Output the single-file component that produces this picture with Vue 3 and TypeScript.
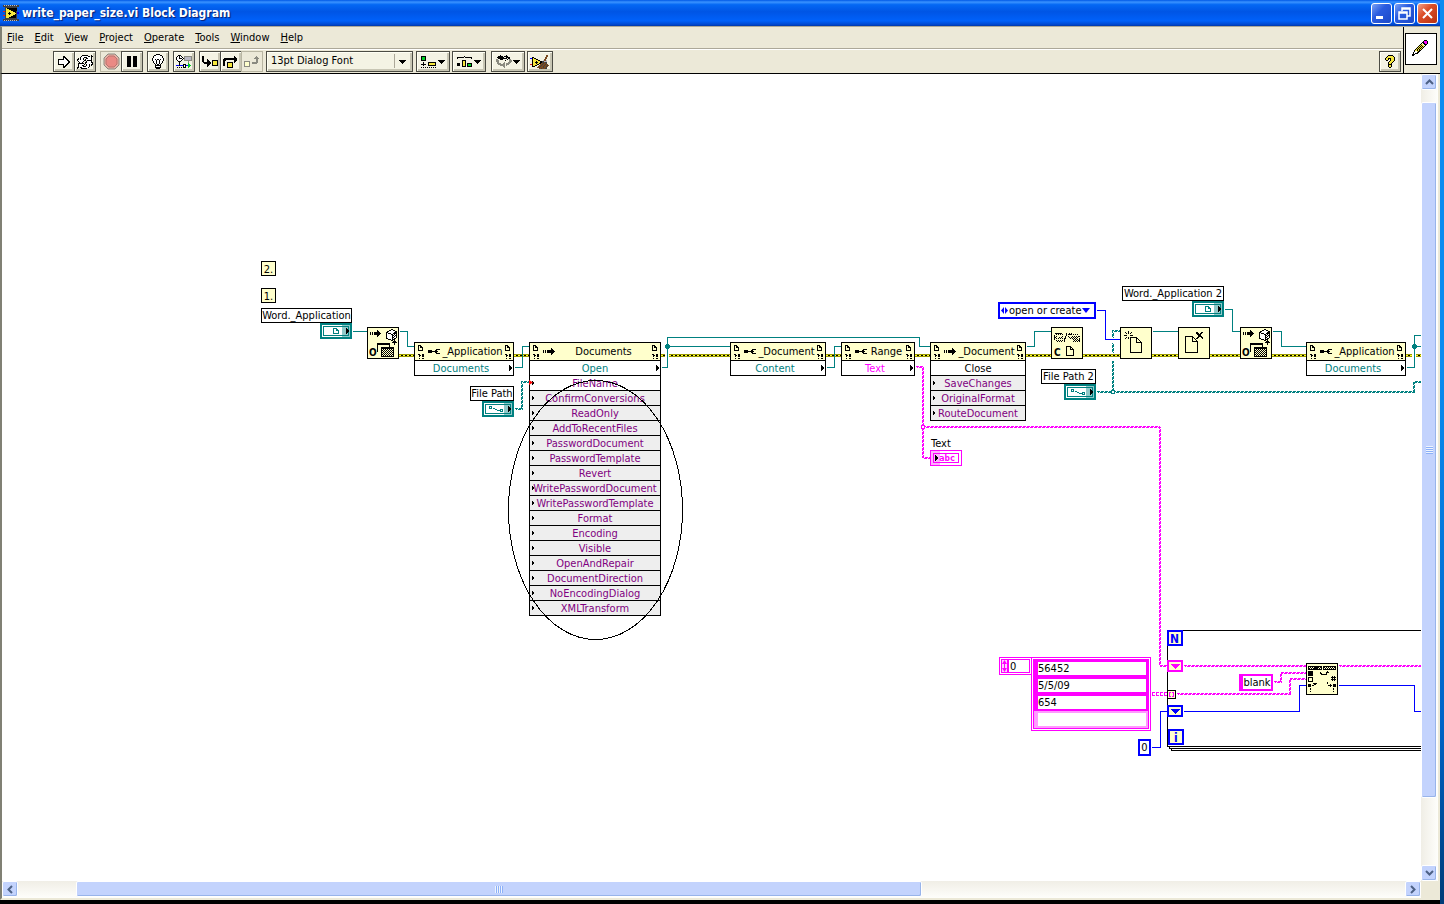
<script setup lang="ts">
import { h, ref, type FunctionalComponent } from 'vue'

type Part = [d: string, fill?: string, stroke?: string, width?: number]

const palette: Record<string, string> = {
  '#': '#000', w: '#fff', y: '#ffffcc', Y: '#f5e63c', g: '#00cc22', t: '#008080', m: '#ff00ff', b: '#0000ff',
  o: '#8a8a80', r: '#d22', n: '#7a4a20', k: '#404040', s: '#b8b8c4',
}

const Bits: FunctionalComponent<{ art: string[] }> = ({ art }) => {
  const paths: Record<string, string> = {}
  art.forEach((row, y) => [...row].forEach((c, x) => {
    if (palette[c]) paths[c] = (paths[c] ?? '') + `M${x} ${y}h1v1h-1z`
  }))
  const width = Math.max(...art.map((r) => r.length))
  return h('svg', { width, height: art.length, 'shape-rendering': 'crispEdges', 'aria-hidden': 'true' },
    Object.entries(paths).map(([c, d]) => h('path', { d, fill: palette[c] })))
}
Bits.props = ['art']

const Shape: FunctionalComponent<{ parts: Part[]; width: number; height: number }> = (p) =>
  h('svg', { width: p.width, height: p.height, 'aria-hidden': 'true' },
    p.parts.map(([d, fill, stroke, w]) => h('path', { d, fill: fill ?? 'none', stroke: stroke ?? 'none', 'stroke-width': w ?? 1 })))
Shape.props = ['parts', 'width', 'height']

const art = {
  run: ['.....##.....', '.....###....', '.....#w##...', '######ww##..', '#wwwwwwww##.', '#wwwwwwwww##', '#wwwwwwwww##', '#wwwwwwww##.', '######ww##..', '.....#w##...', '.....###....', '.....##.....'],
  cycle: [
    '.....######...#.', '....#wwwwww##.##', '...#www###wwww#.', '.#.#ww#..##www#.', '##w#ww#.#wwwww#.', '#wwwwww##.#####.',
    '.#wwww#..#wwww#.', '..#ww#..##wwww##', '.######.#wwwwww#', '.#wwwww#.#ww#w##', '.#www##..#ww#.#.', '.#wwww###www#...', '##.##wwwwww#....', '#...######......'],
  pause: Array.from({ length: 11 }, () => '####..####'),
  bulb: [
    '....####....', '..##wwww##..', '.#wwwwwwww#.', '.#wwwwwwww#.', '#wwwwwwwwww#', '#ww#w##w#ww#', '#www#ww#www#', '.#ww#ww#ww#.',
    '.#ww#ww#ww#.', '..#w#ww#w#..', '...#w##w#...', '...######...', '...#wwww#...', '...######...', '....####....'],
  retain: [
    '..###...........', '.#w#w#..oooooooo', '#ww#ww#.osssssso', '#ww###w#osssssso', '#wwwww#.osssssso', '.#www#..oooooooo',
    '..###.......o...', '...#........o...', '...#........g...', '...#...###..gg..', 'bbb#bbb#w#bbggg.', '.......#w#..gg..', '.#.#.#.###..g...'],
  into: [
    '##..............', '##..............', '##..............', '##...#..........', '##...##...######', '##...###..#YYYY#',
    '.########.#YYYY#', '..#######.#YYYY#', '.....###..#YYYY#', '.....##...######', '.....#..........'],
  over: [
    '...........#....', '...........##...', '.#############..', '##############..', '###........###..', '##.........##...',
    '##..######.#....', '##..#YYYY#......', '##..#YYYY#......', '##..#YYYY#......', '....#YYYY#......', '....######......'],
  out: [
    '............o...', '...........ooo..', '..........ooooo.', '............oo..', '............oo..', 'oooooo......oo..',
    'oyyyyo..oooooo..', 'oyyyyo..ooooo...', 'oyyyyo..........', 'oyyyyo..........', 'oooooo..........'],
  align: [
    '#####...........', '#ggg#...........', '#ggg#...........', '#ggg#...........', '#####...........', '................',
    '..#....########.', '..#....#YYYYYY#.', '#####..#YYYYYY#.', '..#....########.', '................', '#.#.#.#.#.#.#.#.'],
  distribute: [
    '.......#........', '#######.#######.', '#.............#.', '................', '.....####.......', '.....#YY#.......',
    '.....#YY#.......', '###..#YY#.#####.', '###..#YY#.#ggg#.', '###..#YY#.#ggg#.', '.....####.#####.'],
  reorder: [
    '....#.....#.....', '..#####.####....', '.#######..####..', '..#########.##..', 'oo..###....#.oo.', 'ooo......#...ooo',
    'ooo..........ooo', '.oo.....o...ooo.', '.oooo..oo.oooo..', '..ooooooo.ooo...', '....ooooo.o.....', '.......oo.......', '........o.......'],
  clean: [
    '................nn..', '................nn..', '..##...........nn...', 'bb#Y##.........nn...', '..#YYY##......nn....', '..#YYYYY##...snns...',
    '..#YYY#YYY##kksss...', '..#YY###YY##kknkk...', '..#YYY#YY##nnknnk...', 'rr#YYYY##.nnknnknn..', '..#YY##..nnknnknnkn.', '..###...nnknnknnkn..', '.......nnknnnknnk...',
    '.........nnknnnkk...'],
  down: ['#######', '.#####.', '..###..', '...#...'],
  doc: ['###..', '#.##.', '#.###', '#...#', '#...#', '#####'],
  fault: ['##..##', '.##.##', '.#..##', '......', '.#..##'],
  wrench: ['........####', '####...##...', '##########..', '####...##...', '........####'],
  invoke: ['........#...', '........##..', '#.#.#######.', '#.#.########', '#.#.#######.', '........##..', '........#...'],
  nib: ['#..', '##.', '###', '###', '##.', '#..'],
  tinyNib: ['#.', '##', '##', '#.'],
  logo: [
    'kskskskskskskskk', 'kkkkkkkkkkkkkkkk', '..kkkkkkkkkkkk..', '..kY##########..', '..kYYY########..', '..kYYYYY######..',
    'rrkYYYYYYY###k..', '..kYYY#YYYYY#kbb', '..kYY###YYYYYkbb', '..kYYY#YYYYY#k..', 'rrkYYYYYYY###k..', '..kYYYYY#####k..',
    '..kYYY#######k..', '..kkkkkkkkkkkk..', 'kkkkkkkkkkkkkkkk', 'kskskskskskskskk'],
  pencil: [
    '............###.', '...........#mmm#', '..........##mmm#', '.........#w##mm#', '........#YYw###.', '.......#Y#YYw#..', '......#Y#Y#Y#...',
    '.....#Y#Y#Y#....', '....#Y#Y#Y#.....', '...#Y#Y#Y#......', '..#YY#Y##.......', '..#wwY##........', '.#www##.........', '.#w###..........', '###.............', '##..............'],
  question: [
    '...#####...', '..#YYYYY#..', '.#YYYYYYY#.', '#YY###YYY#.', '#YY#.#YYY#.', '.##..#YYY#.', '....#YYY#..', '...#YYY#...',
    '...#YY#....', '...####....', '...#YY#....', '...#YY#....', '....##.....'],
}

const stopSign: Part[] = [['M5 1h7l4 4v7l-4 4h-7l-4-4v-7z', '#e8b0a4', '#8a8a80', 1], ['M6 3h5l3 3v5l-3 3h-5l-3-3v-5z', '#ea8a84', '#b8746e', 1]]

const menus = ['File', 'Edit', 'View', 'Project', 'Operate', 'Tools', 'Window', 'Help']
const toolGroups: { label: string; art?: string[]; off?: boolean }[][] = [
  [{ label: 'Run', art: art.run }, { label: 'Run Continuously', art: art.cycle }],
  [{ label: 'Abort Execution', off: true }, { label: 'Pause', art: art.pause }],
  [{ label: 'Highlight Execution', art: art.bulb }],
  [{ label: 'Retain Wire Values', art: art.retain }],
  [{ label: 'Step Into', art: art.into }, { label: 'Step Over', art: art.over }, { label: 'Step Out', art: art.out, off: true }],
]
const layoutTools = [
  { label: 'Align Objects', art: art.align }, { label: 'Distribute Objects', art: art.distribute }, { label: 'Reorder', art: art.reorder },
]

// Diagram coordinates are window coordinates; the canvas begins at this point.
const origin = { x: 2, y: 74 }
const at = (x: number, y: number, w?: number) => ({
  left: `${x - origin.x}px`, top: `${y - origin.y}px`, ...(w ? { width: `${w}px` } : {}),
})

interface Row { text: string; tone?: string; input?: boolean; output?: boolean; grey?: boolean }
const arg = (text: string, grey = true): Row => ({ text, tone: 'purple', input: true, grey })
const nodes: { x: number; w: number; kind: 'wrench' | 'invoke'; title: string; rows: Row[] }[] = [
  { x: 414, w: 100, kind: 'wrench', title: '_Application', rows: [{ text: 'Documents', tone: 'teal', output: true }] },
  {
    x: 529, w: 132, kind: 'invoke', title: 'Documents', rows: [
      { text: 'Open', tone: 'teal', output: true }, arg('FileName', false),
      ...['ConfirmConversions', 'ReadOnly', 'AddToRecentFiles', 'PasswordDocument', 'PasswordTemplate', 'Revert', 'WritePasswordDocument',
        'WritePasswordTemplate', 'Format', 'Encoding', 'Visible', 'OpenAndRepair', 'DocumentDirection', 'NoEncodingDialog', 'XMLTransform'].map((t) => arg(t)),
    ],
  },
  { x: 730, w: 96, kind: 'wrench', title: '_Document', rows: [{ text: 'Content', tone: 'teal', output: true }] },
  { x: 841, w: 74, kind: 'wrench', title: 'Range', rows: [{ text: 'Text', tone: 'pink', output: true }] },
  { x: 930, w: 96, kind: 'invoke', title: '_Document', rows: [{ text: 'Close' }, arg('SaveChanges'), arg('OriginalFormat'), arg('RouteDocument')] },
  { x: 1306, w: 100, kind: 'wrench', title: '_Application', rows: [{ text: 'Documents', tone: 'teal', output: true }] },
]

const labels = [
  { x: 261, y: 261, w: 15, text: '2.', note: true }, { x: 261, y: 288, w: 15, text: '1.', note: true },
  { x: 261, y: 308, w: 91, text: 'Word._Application' }, { x: 470, y: 386, w: 44, text: 'File Path' },
  { x: 1122, y: 286, w: 102, text: 'Word._Application 2' }, { x: 1041, y: 369, w: 55, text: 'File Path 2' },
]
const terminals = [
  { x: 320, y: 323, path: false }, { x: 482, y: 401, path: true }, { x: 1192, y: 301, path: false }, { x: 1064, y: 384, path: true },
]

const solidWires = [
  { c: '#008080', p: '352,331 367,331' }, { c: '#008080', p: '399,331 407,331 407,346 414,346' },
  { c: '#008080', p: '514,367 522,367 522,346 529,346' }, { c: '#008080', p: '661,367 667,367 667,337 919,337 919,346 930,346' },
  { c: '#008080', p: '667,346 730,346' }, { c: '#008080', p: '826,367 834,367 834,346 841,346' },
  { c: '#008080', p: '1026,346 1034,346 1034,331 1051,331' }, { c: '#008080', p: '1152,331 1178,331' },
  { c: '#008080', p: '1224,309 1232,309 1232,331 1240,331' }, { c: '#008080', p: '1272,331 1281,331 1281,346 1306,346' },
  { c: '#008080', p: '1406,367 1414,367 1414,335 1440,335' }, { c: '#008080', p: '1414,346 1440,346' },
  { c: '#0000ff', p: '1096,310 1105,310 1105,339 1120,339' }, { c: '#0000ff', p: '1151,747 1160,747 1160,711 1167,711' },
  { c: '#0000ff', p: '1183,711 1299,711 1299,685 1306,685' }, { c: '#0000ff', p: '1338,685 1414,685 1414,711 1440,711' },
]
const wavyWires = [
  { c: '#008080', p: '514,408 521,408 521,381 529,381' }, { c: '#008080', p: '1096,391 1413,391 1413,381 1440,381' },
  { c: '#008080', p: '1112,391 1112,359' }, { c: '#008080', p: '1112,351 1112,342' }, { c: '#008080', p: '1112,336 1112,330 1120,330' },
  { c: '#ff00ff', p: '915,366 922,366 922,457 930,457' }, { c: '#ff00ff', p: '922,426 1159,426 1159,665 1167,665' },
  { c: '#ff00ff', p: '1183,665 1306,665' }, { c: '#ff00ff', p: '1338,665 1440,665' },
  { c: '#ff00ff', p: '1273,681 1280,681 1280,672 1306,672' }, { c: '#ff00ff', p: '1176,693 1289,693 1289,678 1306,678' },
]
const errorWires = [[399, 414], [514, 529], [661, 665], [669, 730], [826, 841], [915, 930], [1026, 1051], [1083, 1120], [1152, 1178], [1210, 1240], [1272, 1306], [1406, 1412], [1416, 1440]]

const fonts = ['13pt Dialog Font', '13pt Application Font', '13pt System Font']
const font = ref(fonts[0])
const operations = ['open or create', 'open', 'create']
const operation = ref(operations[0])
const cells = ref(['56452', '5/5/09', '654', ''])
const index = ref('0')
const start = ref('0')
const pattern = ref('blank')
const vertical = { before: 12, thumb: 696, after: 67 }
const horizontal = { before: 58, thumb: 845, after: 484 }
</script>

<template>
  <div class="desktop">
    <main class="window">
      <header class="title">
        <Bits :art="art.logo" />
        <h1>write_paper_size.vi Block Diagram</h1>
        <button class="cap" aria-label="Minimize"><svg width="19" height="19"><path d="M4 12h7v3h-7z" fill="#fff" /></svg></button>
        <button class="cap" aria-label="Restore"><svg width="19" height="19"><path d="M7 7V4h8v8h-3M7 5h8M4 8h8v7h-8zM4 9h8" fill="none" stroke="#fff" stroke-width="1.5" /></svg></button>
        <button class="cap close" aria-label="Close"><svg width="19" height="19"><path d="M5 5l9 9M14 5l-9 9" stroke="#fff" stroke-width="2" /></svg></button>
      </header>
      <div class="bars">
        <div class="bar-rows">
          <nav class="menu">
            <button v-for="m in menus" :key="m"><u>{{ m[0] }}</u>{{ m.slice(1) }}</button>
          </nav>
          <div class="tools" role="toolbar" aria-label="Diagram tools">
            <div v-for="(g, i) in toolGroups" :key="i" class="group">
              <button v-for="t in g" :key="t.label" class="tool" :class="{ off: t.off }" :aria-label="t.label" :disabled="t.off">
                <Bits v-if="t.art" :art="t.art" />
                <Shape v-else :parts="stopSign" :width="17" :height="17" />
              </button>
            </div>
            <div class="font">
              <select v-model="font" aria-label="Text settings"><option v-for="f in fonts" :key="f">{{ f }}</option></select>
              <Bits class="font-arrow" :art="art.down" />
            </div>
            <button v-for="t in layoutTools" :key="t.label" class="tool wide" :class="{ apart: t.label === 'Reorder' }" :aria-label="t.label">
              <Bits :art="t.art" /><Bits :art="art.down" />
            </button>
            <button class="tool broom" aria-label="Clean Up Diagram"><Bits :art="art.clean" /></button>
            <button class="tool help" aria-label="Context Help"><Bits :art="art.question" /></button>
          </div>
        </div>
        <div class="vi-icon"><div class="vi-face"><Bits :art="art.pencil" /></div></div>
      </div>

      <div class="work">
        <section class="canvas" aria-label="Block diagram">
          <svg class="layer" aria-hidden="true" shape-rendering="crispEdges">
            <defs>
              <pattern id="dither" width="2" height="2" patternUnits="userSpaceOnUse"><path d="M0 0h1v1h-1zM1 1h1v1h-1z" /></pattern>
            </defs>
            <g :transform="`translate(${-origin.x} ${-origin.y})`">
              <g v-for="([a, b], i) in errorWires" :key="'e' + i">
                <rect :x="a" y="354" :width="b - a" height="3" fill="#999900" />
                <path :d="`M${a} 355.5H${b}`" stroke="#000" />
                <path :d="`M${a} 355.5H${b}`" stroke="#ffff33" stroke-dasharray="2 2" />
              </g>
              <g transform="translate(.5 .5)" fill="none">
                <polyline v-for="w in solidWires" :key="w.p" :points="w.p" :stroke="w.c" />
                <g v-for="w in wavyWires" :key="w.p">
                  <polyline :points="w.p" :stroke="w.c" stroke-dasharray="3 1" />
                  <polyline :points="w.p" :stroke="w.c" stroke-dasharray="3 1" stroke-dashoffset="2" transform="translate(1 1)" />
                </g>
                <path d="M1151 692h16M1151 695h16" stroke="#f0f" stroke-dasharray="3 1" />
                <path d="M1151 693.5h16" stroke="#f0f" stroke-width="2" stroke-dasharray="1 3" />
              </g>
              <circle cx="667.5" cy="346.5" r="2.5" fill="#008080" /><circle cx="1414.5" cy="346.5" r="2.5" fill="#008080" />
              <circle cx="1113" cy="392" r="2" fill="#fff" stroke="#008080" /><circle cx="923" cy="427" r="2" fill="#fff" stroke="#f0f" />

              <path d="M1440 630.5H1167.5V746.5H1440M1169.5 747v1.5H1440M1171.5 749v1.5H1440" fill="none" stroke="#000" />

              <g v-for="x in [367, 1240]" :key="x" :transform="`translate(${x} 327)`">
                <rect x=".5" y=".5" width="31" height="31" fill="#ffc" stroke="#000" />
                <path d="M3 5h1v3h-1zM5 5h1v3h-1zM7 5h3v-2h1v1h1v1h1v1h1v1h-1v1h-1v1h-1v1h-1v-2h-3z" />
                <path d="M19.5 5.5l5-3 5 2v6l-4 3-6-2zM19.5 5.5l6 2v6M25.5 7.5l4-3" fill="#fff" stroke="#000" />
                <path d="M26 7l3-2v5l-3 2z" fill="url(#dither)" />
                <path d="M10.5 25v-9h12v4M10 17.5h13" fill="none" stroke="#000" />
                <rect x="14.5" y="20.5" width="12" height="9" fill="url(#dither)" stroke="#000" /><path d="M14 21.5h13M27.5 13v5M25 15.5h5M26 14.5h3" stroke="#000" />
                <text x="2" y="29">O</text>
              </g>
              <g transform="translate(1051 327)">
                <rect x=".5" y=".5" width="31" height="31" fill="#ffc" stroke="#000" />
                <path d="M4 6h7v2h-7zM3 9h3v3h-3zM7 10h4v2h-4zM5 13h7v2h-7zM17 6h4v2h-4zM20 9h8v2h-8zM22 12h7v3h-7zM17 9h2v2h-2z" fill="url(#dither)" />
                <path d="M3.5 8v6M11.5 7v6M5 6.5h5M18 7.5h9M19 11.5h8M28.5 9v6" fill="none" stroke="#000" stroke-dasharray="1 1" />
                <path d="M15.5 6v2l-1 2-1 3v2M15.5 19.5h4l3 3v6h-7zM19.5 19v3h3" fill="none" stroke="#000" />
                <text x="3" y="29">C</text>
              </g>
              <g transform="translate(1120 327)">
                <rect x=".5" y=".5" width="31" height="31" fill="#ffc" stroke="#000" />
                <path d="M10.5 10.5h6l5 5v10h-11zM16.5 10v5h5M8.5 4v3M5 5l2 2M12 5l-2 2M4 8.5h3M10 8.5h3M5 12l2-2M8.5 10v2" fill="none" stroke="#000" />
              </g>
              <g transform="translate(1178 327)">
                <rect x=".5" y=".5" width="31" height="31" fill="#ffc" stroke="#000" />
                <path d="M7.5 9.5h7l5 5v11h-12zM14.5 9v5h5" fill="none" stroke="#000" />
                <path d="M18 5h2v1h1v1h1v-1h1v-1h2v1h-1v1h-1v2h1v1h1v2h-1v-1h-1v-1h-2v1h-1v1h-2v-1h1v-1h1v-2h-1v-1h-1z" />
              </g>
              <g transform="translate(1306 663)">
                <rect x=".5" y=".5" width="31" height="31" fill="#ffc" stroke="#000" />
                <path d="M2.5 3.5h13v3h-13zM17.5 3.5h12v3h-12z" fill="url(#dither)" stroke="#000" />
                <path d="M8 3h4v4h-4zM2 8h5v5h-5zM2 21h3v3h-3zM27 21h3v3h-3zM4 25h1v2h-1zM4 28h1v1h-1zM27 25h1v2h-1zM27 28h1v1h-1zM6 22h2v1h-2zM22 22h4v1h-4zM24 21h1v3h-1z" />
                <path d="M2.5 14.5h4v4h-4zM14 9.5l2 2h4l2-3M20 9.5h3M8 21.5h1v-2M7 20.5h4M25 14.5h5M25 16.5h5M26.5 13v5M28.5 13v5M21 19v2" fill="none" stroke="#000" />
              </g>

              <rect x="1168" y="631" width="14" height="14" fill="#ffc" stroke="#00f" stroke-width="2" /><text class="loop" x="1170" y="643">N</text>
              <rect x="1169" y="730" width="14" height="14" fill="#ffc" stroke="#00f" stroke-width="2" /><text class="loop" x="1174" y="742">i</text>
              <rect x="1168" y="661" width="14" height="10" fill="#ffc" stroke="#f0f" stroke-width="2" /><path d="M1170 664h10l-5 5z" fill="#f0f" />
              <rect x="1168" y="706" width="14" height="10" fill="#ffc" stroke="#00f" stroke-width="2" /><path d="M1170 709h10l-5 5z" fill="#00f" />
              <rect x="1167.5" y="690.5" width="8" height="8" fill="#ffc" stroke="#000" /><path d="M1171 692.5h-1.5v4h1.5M1172 692.5h1.5v4h-1.5" fill="none" stroke="#f0f" />
            </g>
          </svg>

          <article v-for="n in nodes" :key="n.x" class="node" :class="n.kind" :style="at(n.x, 342, n.w)">
            <div class="node-head">
              <span class="marks"><Bits :art="art.doc" /><Bits :art="art.fault" /></span>
              <Bits :art="art[n.kind]" />
              <b>{{ n.title }}</b>
              <span class="marks"><Bits :art="art.doc" /><Bits :art="art.fault" /></span>
            </div>
            <div v-for="r in n.rows" :key="r.text" class="row" :class="[r.tone, { grey: r.grey }]">
              <Bits v-if="r.input" class="in" :art="art.tinyNib" />
              {{ r.text }}
              <Bits v-if="r.output" class="out" :art="art.nib" />
            </div>
          </article>

          <div v-for="l in labels" :key="l.text" class="label" :class="{ note: l.note }" :style="at(l.x, l.y, l.w)">{{ l.text }}</div>
          <div v-for="t in terminals" :key="t.x" class="terminal" :style="at(t.x, t.y)">
            <div class="terminal-face">
              <svg v-if="t.path" width="18" height="8" shape-rendering="crispEdges"><path d="M3.5 1.5h2v2h-2zM14.5 4.5h2v2h-2zM7 3.5h2M9 4.5h2M11 5.5h3" fill="none" stroke="#008080" /></svg>
              <svg v-else width="16" height="8" shape-rendering="crispEdges"><path d="M9.5 1.5h3l2 2v3h-5zM12.5 1v2h2" fill="none" stroke="#008080" /></svg>
            </div>
            <Bits class="out" :art="art.nib" />
          </div>

          <div class="plain" :style="at(931, 436)">Text</div>
          <div class="string-out" :style="at(930, 450)"><span>abc</span><Bits class="in" :art="art.nib" /></div>

          <div class="enum" :style="at(998, 302, 98)">
            <svg width="7" height="7"><path d="M3 0v7l-3-3.5zM4 0v7l3-3.5z" fill="#00f" /></svg>
            <select v-model="operation" aria-label="File operation"><option v-for="o in operations" :key="o">{{ o }}</option></select>
            <svg width="8" height="5"><path d="M0 0h8l-4 5z" fill="#00f" /></svg>
          </div>

          <div class="index" :style="at(999, 657)">
            <div class="spin">
              <button aria-label="Increment"><svg width="5" height="6"><path d="M0 4h5l-2.5-4zM2 4h1v2h-1z" fill="#f0f" /></svg></button>
              <button aria-label="Decrement"><svg width="5" height="6"><path d="M0 2h5l-2.5 4zM2 0h1v2h-1z" fill="#f0f" /></svg></button>
            </div>
            <input v-model="index" aria-label="Array index">
          </div>
          <div class="array" :style="at(1031, 657, 120)">
            <div class="cells">
              <div v-for="(_, i) in cells" :key="i" class="cell" :class="{ empty: i === 3 }"><input v-model="cells[i]" :aria-label="`Element ${i}`"></div>
            </div>
          </div>
          <input v-model="start" class="const number" aria-label="Initial offset" :style="at(1138, 739)">
          <input v-model="pattern" class="const string" aria-label="Search string" :style="at(1239, 674)">

          <svg class="layer over" aria-hidden="true">
            <g :transform="`translate(${-origin.x} ${-origin.y})`">
              <ellipse cx="595.5" cy="510" rx="87" ry="129.5" fill="none" stroke="#000" shape-rendering="crispEdges" />
              <path d="M529 380l4 2.5-4 2.5z" fill="#f00" />
            </g>
          </svg>
        </section>

        <div class="scroll v">
          <button aria-label="Scroll up"><svg width="9" height="6"><path d="M1 5l3.5-3.5L8 5" /></svg></button>
          <i :style="{ flexGrow: vertical.before }" />
          <div class="thumb" :style="{ flexGrow: vertical.thumb }"><span /></div>
          <i :style="{ flexGrow: vertical.after }" />
          <button aria-label="Scroll down"><svg width="9" height="6"><path d="M1 1l3.5 3.5L8 1" /></svg></button>
        </div>
        <div class="scroll h">
          <button aria-label="Scroll left"><svg width="6" height="9"><path d="M5 1l-3.5 3.5L5 8" /></svg></button>
          <i :style="{ flexGrow: horizontal.before }" />
          <div class="thumb" :style="{ flexGrow: horizontal.thumb }"><span /></div>
          <i :style="{ flexGrow: horizontal.after }" />
          <button aria-label="Scroll right"><svg width="6" height="9"><path d="M1 1l3.5 3.5L1 8" /></svg></button>
        </div>
        <div class="corner" />
      </div>
    </main>
  </div>
</template>

<style>
body { overflow: hidden; }
</style>

<style scoped>
* { box-sizing: border-box; }
.desktop {
  display: flex; height: 100vh; padding-right: 4px;
  background: linear-gradient(#0a8cf0, #0a8cf0 40%, #0064c8 80%, #003c78);
  font: 11px/14px "DejaVu Sans Condensed", "DejaVu Sans", sans-serif; color: #000;
}
.window { flex: 1; min-width: 0; display: flex; flex-direction: column; background: #ece9d8; border-bottom: 4px solid #000; }
button, input, select { font: inherit; color: inherit; margin: 0; padding: 0; border: 0; background: none; border-radius: 0; outline: 0; }
svg { display: block; flex: none; }

.title {
  display: flex; align-items: center; gap: 2px; height: 26px; padding: 0 2px 0 3px; color: #fff;
  background: linear-gradient(#0058e6, #3a93ff 8%, #0468f4 18%, #0055e5 45%, #0061fa 80%, #0048d0 94%, #0038a8);
}
.title h1 { flex: 1; margin: 0 0 0 1px; font: bold 12px/16px "DejaVu Sans Condensed", "DejaVu Sans", sans-serif; text-shadow: 1px 1px 1px #0a1e6e; }
.cap { width: 21px; height: 21px; border: 1px solid #fff; border-radius: 3px; background: linear-gradient(135deg, #7ba2f5, #2a5ce0 40%, #1c49c8); }
.cap.close { background: linear-gradient(135deg, #f0a08a, #dc4e28 40%, #b83010); }

.bars { display: flex; height: 48px; border-bottom: 1px solid #000; border-left: 2px solid #808074; border-top: 1px solid #aca899; }
.bar-rows { flex: 1; }
.menu { display: flex; gap: 11px; height: 22px; padding: 0 5px; border-bottom: 1px solid #aca899; }
.menu button { line-height: 20px; }
.tools { display: flex; align-items: center; height: 24px; padding: 0 2px 0 51px; border-top: 1px solid #fff; }
.group { display: flex; margin-right: 4px; }
.tool {
  display: flex; align-items: center; justify-content: center; width: 22px; height: 21px; border: 1px solid #4c4c44; margin-right: -1px;
  background: #f4f3e4; box-shadow: inset 1px 1px #fffff4, inset -2px -2px #c8c6b4;
}
.group .tool:last-child { margin-right: 0; }
.tool.off { border-color: #b8b5a2; box-shadow: none; background: #ece9d8; }
.font { position: relative; width: 147px; height: 21px; margin: 0 3px 0 -1px; border: 1px solid #4c4c44; background: #f4f3e4; box-shadow: inset 1px 1px #fffff4, inset -2px -2px #c8c6b4; }
.font select { appearance: none; width: 100%; height: 17px; padding-left: 4px; }
.font-arrow { position: absolute; right: 6px; top: 8px; pointer-events: none; }
.font::after { content: ""; position: absolute; right: 17px; top: 2px; height: 14px; border-left: 1px solid #aca899; }
.tool.wide { width: 34px; gap: 1px; margin-right: 2px; }
.tool.wide.apart { margin-left: 3px; }
.tool.broom { width: 26px; }
.tool.help { margin-left: auto; margin-right: 0; }
.vi-icon { width: 37px; padding: 6px 1px 0; border-left: 1px solid #000; }
.vi-face { display: flex; align-items: center; justify-content: center; width: 32px; height: 32px; padding: 0 2px 2px 0; border: 1px solid #000; background: #fff; }

.work { flex: 1; min-height: 0; display: grid; grid-template: minmax(0, 1fr) 17px / minmax(0, 1fr) 17px; border-left: 2px solid #808074; border-right: 2px solid #ece9d8; border-bottom: 2px solid #ece9d8; }
.canvas { position: relative; overflow: hidden; background: #fff; }
.layer { position: absolute; inset: 0; width: 100%; height: 100%; }
.layer.over { pointer-events: none; }
.layer text { font: bold 10px "DejaVu Sans Condensed", "DejaVu Sans", sans-serif; }
.layer .loop { font-size: 12px; fill: #00f; }

.node { position: absolute; border: 1px solid #000; background: #fff; text-align: center; white-space: nowrap; }
.node-head { display: flex; align-items: center; height: 17px; padding: 0 2px 0 3px; background: #ffc; }
.node-head b { flex: 1; font-weight: normal; }
.marks { display: grid; gap: 3px; margin-top: 1px; }
.marks + svg { margin-left: 4px; }
.row { position: relative; height: 15px; border-top: 1px solid #000; line-height: 16px; }
.wrench .row { padding-right: 6px; }
.grey { background: #eee; }
.teal { color: #008080; }
.purple { color: #800080; }
.pink { color: #f0f; }
.in { position: absolute; left: 2px; top: 5px; }
.out { position: absolute; right: 1px; top: 4px; }

.label { position: absolute; height: 15px; border: 1px solid #000; background: #fff; line-height: 13px; white-space: nowrap; text-align: center; }
.label.note { background: #ffc; line-height: 15px; }
.plain { position: absolute; line-height: 16px; }
.terminal { position: absolute; width: 32px; height: 16px; padding: 1px; border: 2px solid #008080; background: linear-gradient(90deg, #fff 20px, #90c8c8 20px); }
.terminal-face { height: 10px; border: 1px solid #008080; }
.terminal .out { top: 3px; }
.string-out { position: absolute; width: 32px; height: 16px; padding: 2px; border: 1px solid #f0f; background: linear-gradient(90deg, #ffb0ff 9px, #fff 9px); color: #f0f; }
.string-out span { display: block; height: 10px; padding-left: 5px; border: 1px solid #f0f; font: bold 9px/8px "DejaVu Sans Mono", monospace; }
.string-out .in { left: 4px; top: 4px; }
.enum { position: absolute; display: flex; align-items: center; height: 17px; padding: 0 4px 0 1px; border: 2px solid #00f; background: #fff; }
.enum select { flex: 1; min-width: 0; appearance: none; padding-left: 1px; height: 13px; line-height: 13px; }

.index { position: absolute; display: flex; width: 33px; height: 18px; padding: 1px; border: 1px solid #f0f; background: #fff; }
.index input { flex: 1; min-width: 0; border: 1px solid #f0f; padding: 2px 0 0 1px; }
.spin { display: grid; width: 7px; border: 1px solid #f0f; background: #ffd0ff; }
.spin button { display: flex; align-items: center; }
.array { position: absolute; padding: 1px; border: 1px solid #f0f; background: #fff; }
.cells { border: 1px solid #f0f; }
.cell { padding: 2px 2px 2px 4px; background: #f0f; }
.cell input { display: block; width: 100%; height: 13px; background: #fff; }
.cell.empty { background: #f9f; }
.const { position: absolute; height: 17px; background: #fff; text-align: center; }
.const.number { width: 13px; border: 2px solid #00f; }
.const.string { width: 34px; border: 2px solid #f0f; border-left-width: 4px; }

.scroll { display: flex; }
.scroll.v { flex-direction: column; padding: 0 1px 0 0; background: linear-gradient(90deg, #f0eee6, #fefefb); }
.scroll.h { grid-row: 2; padding: 0 0 1px; background: linear-gradient(#f0eee6, #fefefb); }
.scroll i { flex-basis: 0; }
.scroll button, .thumb { display: flex; align-items: center; justify-content: center; border: 1px solid #fff; border-radius: 2px; background: #c3d3fd; box-shadow: inset -1px -1px #98b4ea; }
.scroll button { flex: none; width: 16px; height: 16px; }
.scroll path { fill: none; stroke: #4d6185; stroke-width: 2; }
.thumb { flex-basis: 0; }
.thumb span { background: repeating-linear-gradient(#eef4fe 0 1px, #8cb0f8 1px 2px); width: 7px; height: 8px; }
.h .thumb span { background: repeating-linear-gradient(90deg, #eef4fe 0 1px, #8cb0f8 1px 2px); width: 8px; height: 7px; }
.corner { background: #ece9d8; }
</style>
